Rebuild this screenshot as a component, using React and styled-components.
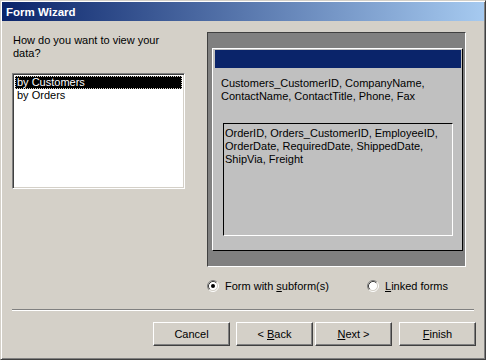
import styled, { createGlobalStyle } from 'styled-components'

const GlobalStyle = createGlobalStyle`
  html, body {
    margin: 0;
    padding: 0;
    background: #d4d0c8;
  }
  body {
    font-family: "Liberation Sans", Arial, sans-serif;
    font-size: 11px;
    color: #000;
  }
`

const Radio = ({ checked }) => (
  <svg width="12" height="12" viewBox="0 0 12 12">
    <circle cx="6" cy="6" r="4.5" fill="#fff" />
    <path d="M2.11 9.89 A5.5 5.5 0 0 1 9.89 2.11" fill="none" stroke="#808080" />
    <path d="M9.89 2.11 A5.5 5.5 0 0 1 2.11 9.89" fill="none" stroke="#fff" />
    <path d="M2.82 9.18 A4.5 4.5 0 0 1 9.18 2.82" fill="none" stroke="#404040" />
    <path d="M9.18 2.82 A4.5 4.5 0 0 1 2.82 9.18" fill="none" stroke="#d4d0c8" />
    {checked && <circle cx="6" cy="6" r="2" fill="#000" />}
  </svg>
)

const App = () => {
  return (
    <>
      <GlobalStyle />
      <Window>
        <TitleBar>Form Wizard</TitleBar>
        <Content>
          <TopRow>
            <LeftCol>
              <Question>How do you want to view your<br />data?</Question>
              <ListBox>
                <ListItem selected>by Customers</ListItem>
                <ListItem>by Orders</ListItem>
              </ListBox>
            </LeftCol>
            <PreviewPanel>
              <FormBox>
                <FormHeader />
                <MainFields>
                  Customers_CustomerID, CompanyName,<br />
                  ContactName, ContactTitle, Phone, Fax
                </MainFields>
                <SubformBox>
                  OrderID, Orders_CustomerID, EmployeeID,<br />
                  OrderDate, RequiredDate, ShippedDate,<br />
                  ShipVia, Freight
                </SubformBox>
              </FormBox>
            </PreviewPanel>
          </TopRow>
          <RadioRow>
            <RadioOption>
              <Radio checked />
              <span>Form with <U>s</U>ubform(s)</span>
            </RadioOption>
            <RadioOption>
              <Radio />
              <span><U>L</U>inked forms</span>
            </RadioOption>
          </RadioRow>
          <Separator />
          <ButtonRow>
            <Button $gap={6}>Cancel</Button>
            <Button $gap={2}><span>{'< '}<U>B</U>ack</span></Button>
            <Button $gap={7}><span><U>N</U>{'ext >'}</span></Button>
            <Button><span><U>F</U>inish</span></Button>
          </ButtonRow>
        </Content>
      </Window>
    </>
  )
}

const Window = styled.div`
  width: 486px;
  height: 360px;
  box-sizing: border-box;
  display: flex;
  flex-direction: column;
  padding: 1px;
  border: 1px solid;
  border-color: #d4d0c8 #404040 #404040 #d4d0c8;
  box-shadow: inset 1px 1px #fff, inset -1px -1px #808080;
  background: #d4d0c8;
`

const TitleBar = styled.div`
  height: 19px;
  display: flex;
  align-items: center;
  padding-left: 4px;
  background: linear-gradient(90deg, #0a246a, #a6caf0);
  color: #fff;
  font-weight: bold;
  font-size: 11.5px;
`

const Content = styled.div`
  flex: 1;
  display: flex;
  flex-direction: column;
  padding: 11px 8px 0 10px;
`

const TopRow = styled.div`
  display: flex;
  align-items: flex-start;
`

const LeftCol = styled.div`
  width: 173px;
  display: flex;
  flex-direction: column;
`

const Question = styled.p`
  margin: 2px 0 0 1px;
  line-height: 13px;
`

const ListBox = styled.div`
  margin-top: 13px;
  height: 116px;
  box-sizing: border-box;
  background: #fff;
  border: 1px solid;
  border-color: #808080 #fff #fff #808080;
  box-shadow: inset 1px 1px #404040, inset -1px -1px #d4d0c8;
  padding: 2px;
`

const ListItem = styled.div`
  height: 13px;
  line-height: 13px;
  padding-left: 2px;
  background: ${p => (p.selected ? '#000' : 'transparent')};
  color: ${p => (p.selected ? '#fff' : '#000')};
  outline: ${p => (p.selected ? '1px dotted #d4d0c8' : 'none')};
  outline-offset: -1px;
`

const PreviewPanel = styled.div`
  margin-left: 22px;
  width: 259px;
  height: 235px;
  box-sizing: border-box;
  display: flex;
  background: #808080;
  border: 1px solid;
  border-color: #404040 #fff #fff #404040;
  padding: 15px 2px 15px 4px;
`

const FormBox = styled.div`
  flex: 1;
  display: flex;
  flex-direction: column;
  background: #c0c0c0;
  border: 1px solid;
  border-color: #fff #000 #000 #fff;
  padding: 1px 1px 14px 2px;
`

const FormHeader = styled.div`
  height: 18px;
  background: #0a246a;
`

const MainFields = styled.div`
  margin: 9px 0 0 6px;
  line-height: 13px;
`

const SubformBox = styled.div`
  flex: 1;
  margin: 20px 8px 0 8px;
  border: 1px solid;
  border-color: #000 #fff #fff #000;
  padding: 3px 1px 0 1px;
  line-height: 13px;
`

const RadioRow = styled.div`
  display: grid;
  grid-template-columns: 160px auto;
  margin: 12px 0 0 195px;
`

const RadioOption = styled.label`
  display: flex;
  align-items: center;
  gap: 6px;
  height: 14px;
  svg {
    flex-shrink: 0;
  }
`

const U = styled.span`
  text-decoration: underline;
`

const Separator = styled.div`
  margin: 16px 2px 0 0;
  height: 1px;
  background: #808080;
  border-bottom: 1px solid #fff;
`

const ButtonRow = styled.div`
  display: flex;
  justify-content: flex-end;
  margin-top: 11px;
`

const Button = styled.div`
  width: 77px;
  height: 24px;
  box-sizing: border-box;
  display: flex;
  align-items: center;
  justify-content: center;
  white-space: pre;
  margin-right: ${p => p.$gap || 0}px;
  background: #d4d0c8;
  border: 1px solid;
  border-color: #fff #404040 #404040 #fff;
  box-shadow: inset -1px -1px #808080;
`

export default App
